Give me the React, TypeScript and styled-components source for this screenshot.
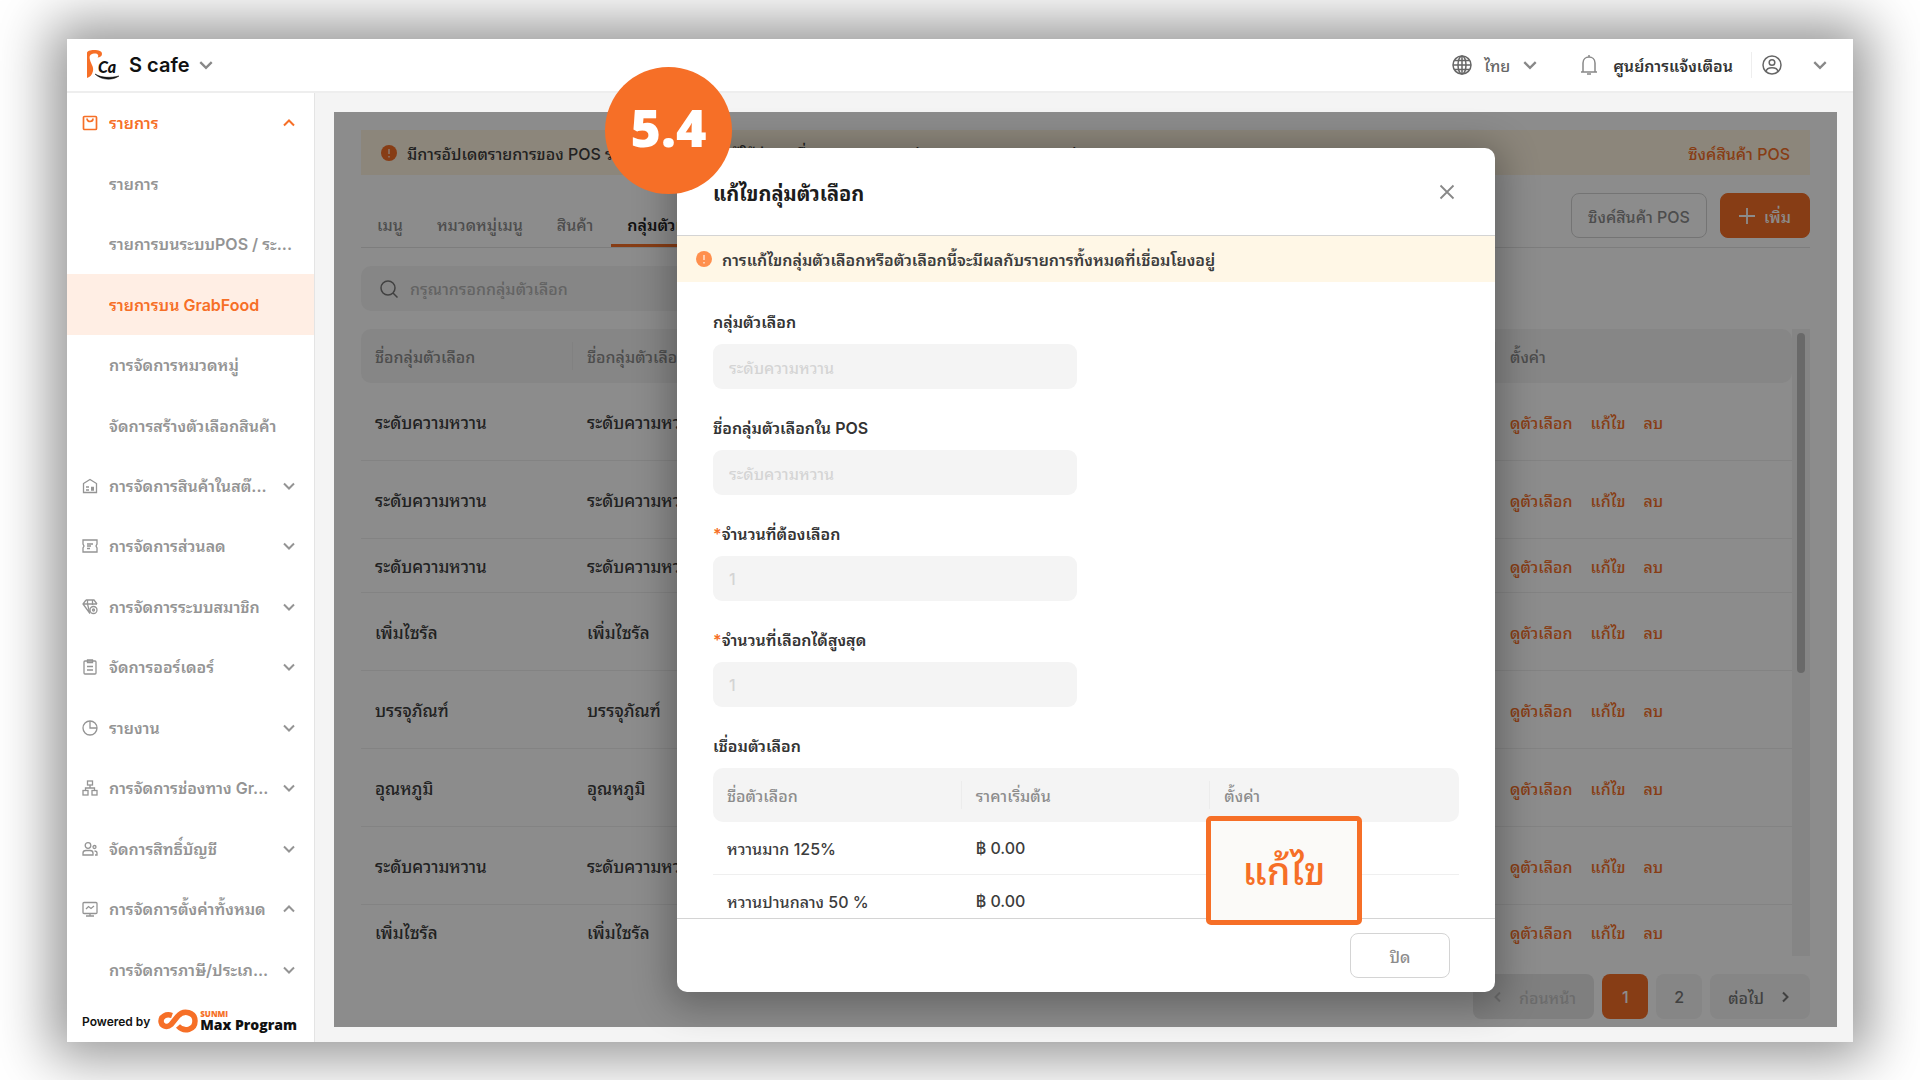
import React from "react";
import styled, { createGlobalStyle, css } from "styled-components";

const GlobalStyle = createGlobalStyle`
  * { box-sizing: border-box; }
  body { margin: 0; background: #fff; font-family: Inter, "Noto Sans Thai Looped", "Noto Looped Thai", Loma, Waree, Garuda, "Noto Sans Thai", "Noto Sans", "Liberation Sans", sans-serif; font-size: 16px; font-weight: 500; color: #3c3c3c; }
  button, input { font: inherit; }
  button { cursor: pointer; }
  a { text-decoration: none; color: inherit; }
  svg { display: block; flex: none; }
`;

const orange = "#f66f27";

const Stage = styled.div`
  height: 100vh;
  min-height: 900px;
  padding: 39px 67px 38px;
  overflow: hidden;
`;
const Frame = styled.div`
  position: relative;
  height: 100%;
  display: grid;
  grid-template: 54px minmax(0, 1fr) / 248px minmax(0, 1fr);
  background: #f4f4f4;
  box-shadow: 0 0 52px 16px rgba(0, 0, 0, 0.42);
`;
const TopBar = styled.header`
  grid-column: 1 / -1;
  display: flex;
  align-items: center;
  justify-content: space-between;
  padding: 0 25px 0 18px;
  background: #fff;
  border-bottom: 2px solid #eee;
`;
const Plain = styled.button`
  display: flex;
  align-items: center;
  padding: 0;
  border: 0;
  background: none;
  color: inherit;
`;
const Brand = styled(Plain)`
  gap: 8px;
  font-size: 20px;
  font-weight: 600;
  color: #111;
`;
const TopTools = styled.div`
  display: flex;
  align-items: center;
  color: #666;
`;
const LangButton = styled(Plain)`
  gap: 12px;
  margin-right: 42px;
`;
const NoticeButton = styled(Plain)`
  gap: 15px;
  font-weight: 600;
  color: #333;
  padding-right: 18px;
  border-right: 1px solid #eee;
`;
const UserButton = styled(Plain)`
  gap: 30px;
  padding-left: 10px;
`;

const Sidebar = styled.aside`
  display: flex;
  flex-direction: column;
  background: #fff;
  border-right: 1px solid #e4e4e4;
`;
const NavList = styled.nav`
  flex: 1;
  display: grid;
  grid-auto-rows: 1fr;
`;
const NavItem = styled.a<{ $tone?: "open" | "active" }>`
  display: grid;
  grid-template-columns: 16px minmax(0, 1fr) 14px;
  align-items: center;
  gap: 11px;
  padding: 0 18px 0 15px;
  font-weight: 600;
  color: ${(p) => (p.$tone ? orange : "#949494")};
  background: ${(p) => (p.$tone === "active" ? "#ffeee4" : "transparent")};
`;
const NavText = styled.span<{ $wide?: boolean }>`
  overflow: hidden;
  white-space: nowrap;
  line-height: 28px;
  ${(p) => p.$wide && css`grid-column: 2 / 4;`}
`;
const Powered = styled.footer`
  display: flex;
  align-items: center;
  gap: 8px;
  height: 42px;
  padding: 0 0 0 15px;
  color: #111;
  font-size: 12px;
  font-weight: 600;
  white-space: nowrap;
`;
const MaxBrand = styled.span`
  display: flex;
  align-items: center;
  gap: 2px;
`;
const PoweredName = styled.span`
  display: flex;
  flex-direction: column;
  font-family: "Open Sans", sans-serif;
  font-weight: 800;
  font-size: 14px;
  line-height: 14px;
`;
const Sunmi = styled.span`
  font-size: 8px;
  line-height: 8px;
  color: ${orange};
`;

const Content = styled.main`
  display: flex;
  padding: 19px 16px 15px 19px;
`;
const Panel = styled.section`
  position: relative;
  flex: 1;
  min-width: 0;
  display: flex;
  flex-direction: column;
  padding: 18px 27px 8px;
  background: #fff;
`;
const Banner = styled.div`
  display: flex;
  align-items: center;
  gap: 10px;
  height: 45px;
  padding: 0 20px;
  background: #fff4e0;
  white-space: nowrap;
`;
const BannerLink = styled.a`
  margin-left: auto;
  color: ${orange};
`;
const TabBar = styled.div`
  display: flex;
  align-items: flex-end;
  margin-top: 18px;
  height: 55px;
  border-bottom: 1px solid #e4e4e4;
`;
const Tab = styled.button<{ $active?: boolean }>`
  height: 44px;
  padding: 0 16px;
  margin-right: 2px;
  border: 0;
  border-bottom: 3px solid ${(p) => (p.$active ? orange : "transparent")};
  background: none;
  white-space: nowrap;
  color: ${(p) => (p.$active ? "#222" : "#8c8c8c")};
  font-weight: ${(p) => (p.$active ? 600 : 500)};
`;
const Actions = styled.div`
  display: flex;
  gap: 13px;
  margin-left: auto;
  align-self: flex-start;
`;
const Button = styled.button<{ $primary?: boolean }>`
  display: flex;
  align-items: center;
  justify-content: center;
  gap: 9px;
  height: 45px;
  min-width: ${(p) => (p.$primary ? 90 : 136)}px;
  padding: 0 15px;
  border-radius: 8px;
  white-space: nowrap;
  border: 1px solid ${(p) => (p.$primary ? orange : "#d4d4d4")};
  background: ${(p) => (p.$primary ? orange : "#fff")};
  color: ${(p) => (p.$primary ? "#fff" : "#8c8c8c")};
`;
const Search = styled.label`
  display: flex;
  align-items: center;
  gap: 12px;
  width: 380px;
  height: 45px;
  margin-top: 18px;
  padding: 0 19px;
  border-radius: 10px;
  background: #f4f4f4;
  color: #8c8c8c;
  input {
    flex: 1;
    min-width: 0;
    border: 0;
    padding: 0;
    background: none;
    &::placeholder { color: #b4b4b4; opacity: 1; }
  }
`;
const TableArea = styled.div`
  display: flex;
  flex: 1;
  min-height: 0;
  margin-top: 18px;
  overflow: hidden;
`;
const ScrollTrack = styled.div`
  width: 18px;
  padding: 4px 5px;
  background: #f2f2f2;
`;
const ScrollThumb = styled.div`
  height: 340px;
  border-radius: 5px;
  background: #c0c0c0;
`;
const Table = styled.table<{ $large?: boolean }>`
  flex: 1;
  width: 100%;
  align-self: flex-start;
  table-layout: fixed;
  border-collapse: separate;
  border-spacing: 0;
  th, td { text-align: left; white-space: nowrap; padding: 0 14px; overflow: hidden; }
  th {
    height: 54px;
    background: linear-gradient(#ececec, #ececec) no-repeat right center / 1px 28px #f4f4f4;
    color: #8c8c8c;
    font-weight: 500;
    &:first-child { border-radius: 10px 0 0 10px; }
    &:last-child { border-radius: 0 10px 10px 0; background: #f4f4f4; }
  }
  td {
    border-bottom: 1px solid #efefef;
    font-size: ${(p) => (p.$large ? 17 : 16)}px;
  }
`;
const Row = styled.tr<{ $height: number }>`
  height: ${(p) => p.$height}px;
`;
const RowLinks = styled.div`
  display: flex;
  gap: 18px;
  font-size: 16px;
  color: ${orange};
`;
const Pager = styled.nav`
  display: flex;
  justify-content: flex-end;
  gap: 8px;
  margin-top: 18px;
`;
const PageButton = styled.button<{ $active?: boolean }>`
  display: flex;
  align-items: center;
  justify-content: center;
  gap: 14px;
  height: 45px;
  min-width: 46px;
  padding: 0 18px;
  border: 0;
  border-radius: 8px;
  background: ${(p) => (p.$active ? orange : "#f4f4f4")};
  color: ${(p) => (p.$active ? "#fff" : "#777")};
  &:disabled { color: #c4c4c4; background: #e8e8e8; }
`;

const Mask = styled.div`
  position: absolute;
  inset: 0;
  background: rgba(0, 0, 0, 0.45);
`;
const Dialog = styled.section`
  position: absolute;
  inset: 36px 342px 35px 343px;
  display: flex;
  flex-direction: column;
  border-radius: 10px;
  background: #fff;
  box-shadow: 0 6px 36px 8px rgba(0, 0, 0, 0.28);
`;
const DialogHead = styled.header`
  display: flex;
  align-items: center;
  justify-content: space-between;
  height: 88px;
  padding: 0 40px 0 36px;
  border-bottom: 1px solid #d4d4d4;
`;
const DialogTitle = styled.h2`
  margin: 0;
  font-size: 20px;
  font-weight: 700;
  color: #1c1c1c;
`;
const Warning = styled.div`
  display: flex;
  align-items: center;
  gap: 10px;
  height: 46px;
  padding: 0 19px;
  background: #fff7e6;
  font-weight: 600;
  white-space: nowrap;
`;
const DialogBody = styled.div`
  flex: 1;
  min-height: 0;
  overflow: hidden;
  padding: 27px 36px 0;
`;
const Field = styled.div`
  display: grid;
  gap: 9px;
  margin-bottom: 26px;
`;
const FieldLabel = styled.label`
  line-height: 26px;
  font-weight: 600;
  color: #333;
`;
const Star = styled.span`
  color: ${orange};
`;
const FieldInput = styled.input`
  width: 364px;
  height: 45px;
  padding: 0 16px;
  border: 0;
  border-radius: 9px;
  background: #f4f4f4;
  color: #d4d4d4;
`;
const DialogFoot = styled.footer`
  display: flex;
  justify-content: flex-end;
  align-items: center;
  height: 74px;
  padding: 0 45px;
  border-top: 1px solid #d4d4d4;
  ${Button} { min-width: 100px; }
`;
const Callout = styled.div`
  position: absolute;
  left: 529px;
  top: 668px;
  width: 156px;
  height: 109px;
  display: flex;
  align-items: center;
  justify-content: center;
  padding-bottom: 6px;
  border: 5px solid ${orange};
  border-radius: 5px;
  background: #fbfaf8;
  color: ${orange};
  font-size: 38px;
  font-weight: 500;
`;
const StepBadge = styled.div`
  position: absolute;
  left: 538px;
  top: 28px;
  width: 127px;
  height: 127px;
  display: flex;
  align-items: center;
  justify-content: center;
  padding-bottom: 8px;
  border-radius: 50%;
  background: ${orange};
  color: #fff;
  font-family: "Open Sans", "Noto Sans", sans-serif;
  font-size: 52px;
  font-weight: 800;
`;

const Chevron = ({ dir = "down", size = 14, color = "#888" }: { dir?: "down" | "up" | "left" | "right"; size?: number; color?: string }) => {
  const d = { down: "M2 4.500l5 5 5-5", up: "M2 9.500l5-5 5 5", left: "M9 2.500L4.500 7 9 11.500", right: "M5 2.500L9.500 7 5 11.500" }[dir];
  return <svg width={size} height={size} viewBox="0 0 14 14" fill="none" stroke={color} strokeWidth="2"><path d={d} /></svg>;
};

const Alert = ({ color = "#ff8f4d" }: { color?: string }) => (
  <svg width="16" height="16" viewBox="0 0 16 16"><circle cx="8" cy="8" r="8" fill={color} /><path d="M8 4v5M8 11v1.4" stroke="#ffe6d6" strokeWidth="1.4" /></svg>
);

const iconPaths: Record<string, React.ReactNode> = {
  bag: <g strokeWidth="1.700"><rect x="1.500" y="1.500" width="13" height="13" rx="1" /><path d="M5 3.500c0 4 6 4 6 0" /></g>,
  stock: <><path d="M1.500 5.500L8 1.500l6.500 4V14.500h-13z" /><path d="M4 9h3M4 12h3M9 9.500h3M9 12h3M9 10.500h3" /></>,
  ticket: <><path d="M1 2h14v4l-1 2 1 2v4H1v-4l1-2-1-2z" /><path d="M5 6h6M5 8h4M5 10.500h3" /></>,
  gem: <><path d="M4 1h8l3 4M8 14.500L1 5l3-4M1 5h14M5.500 1v4l2 8M10.500 1v5" /><circle cx="11.500" cy="11" r="3.500" /><circle cx="11.500" cy="11" r="1" /></>,
  clip: <><rect x="2" y="2" width="12" height="13" rx="1" /><path d="M5.500 1h5v2.500h-5zM5 7.500h6M5 11h6" /></>,
  clock: <><circle cx="8" cy="8" r="7" /><path d="M8 1v7h7" /></>,
  tree: <><rect x="5.500" y="1" width="5" height="4" /><rect x="1" y="10.500" width="5" height="4.500" /><rect x="10" y="10.500" width="5" height="4.500" /><path d="M8 5v3M3.500 10.500V8h9v2.500" /></>,
  users: <><circle cx="6" cy="4.500" r="2.800" /><path d="M1 14v-2c0-2 1.500-2.500 3-2.500h4c1.500 0 3 .5 3 2.500v2z" /><circle cx="12.500" cy="6" r="1.500" /><path d="M12.500 10c2 0 2.500 1 2.500 2v2h-2" /></>,
  screen: <><rect x="1" y="1.500" width="14" height="11" rx="1" /><path d="M4 8l2.500-2.500 2.500 2 3-2.500M4 15h8M8 12.500V15" /></>,
};

const NavIcon = ({ name }: { name?: string }) => (
  <svg width="16" height="16" viewBox="0 0 16 16" fill="none" stroke="currentColor" strokeWidth="1.300">{name && iconPaths[name]}</svg>
);

const BrandLogo = () => (
  <svg width="36" height="36" viewBox="0 0 36 36">
    <path d="M2 6C2 4 5 3 9 3c5 0 8 1 8 4 0 2-2 3.500-4.500 3.500C14 9 13.500 6 9 6.500 5 7 4 9 5 13c1 4 4 7 3 11-1 4-3 6-6 7z" fill={orange} />
    <text x="13" y="26" fontFamily="Lato, sans-serif" fontStyle="italic" fontWeight="900" fontSize="16" fill="#111">Ca</text>
    <path d="M10 27c7 4 15 4 24 2-7 5-18 4-24-2z" fill="#111" stroke="#111" strokeWidth="0.500" />
  </svg>
);

const MaxLogo = () => (
  <svg width="40" height="24" viewBox="0 0 40 24" fill="none" stroke={orange} strokeWidth="5.500">
    <path d="M14 6.500C8 4.500 3 7.500 3 12s5.500 7.500 10 3.500L19.500 7.500C26 0 37 3.500 37 12s-10.500 12-17 5" />
  </svg>
);

type NavEntry = { text: string; icon?: string; chevron?: "up" | "down"; tone?: "open" | "active" };
const nav: NavEntry[] = [
  { text: "รายการ", icon: "bag", chevron: "up", tone: "open" },
  { text: "รายการ" },
  { text: "รายการบนระบบPOS / ระ..." },
  { text: "รายการบน GrabFood", tone: "active" },
  { text: "การจัดการหมวดหมู่" },
  { text: "จัดการสร้างตัวเลือกสินค้า" },
  { text: "การจัดการสินค้าในสต๊...", icon: "stock", chevron: "down" },
  { text: "การจัดการส่วนลด", icon: "ticket", chevron: "down" },
  { text: "การจัดการระบบสมาชิก", icon: "gem", chevron: "down" },
  { text: "จัดการออร์เดอร์", icon: "clip", chevron: "down" },
  { text: "รายงาน", icon: "clock", chevron: "down" },
  { text: "การจัดการช่องทาง Gr...", icon: "tree", chevron: "down" },
  { text: "จัดการสิทธิ์บัญชี", icon: "users", chevron: "down" },
  { text: "การจัดการตั้งค่าทั้งหมด", icon: "screen", chevron: "up" },
  { text: "การจัดการภาษี/ประเภ...", chevron: "down" },
];

const groups: [string, number][] = [
  ["ระดับความหวาน", 78], ["ระดับความหวาน", 78], ["ระดับความหวาน", 54], ["เพิ่มไซรัล", 78],
  ["บรรจุภัณฑ์", 78], ["อุณหภูมิ", 78], ["ระดับความหวาน", 78], ["เพิ่มไซรัล", 54],
];

const fields = [
  { id: "group", label: "กลุ่มตัวเลือก", value: "ระดับความหวาน" },
  { id: "pos", label: "ชื่อกลุ่มตัวเลือกใน POS", value: "ระดับความหวาน" },
  { id: "min", label: "จำนวนที่ต้องเลือก", value: "1", required: true },
  { id: "max", label: "จำนวนที่เลือกได้สูงสุด", value: "1", required: true },
];

const EditDialog = () => (
  <Dialog role="dialog" aria-labelledby="dialog-title">
    <DialogHead>
      <DialogTitle id="dialog-title">แก้ไขกลุ่มตัวเลือก</DialogTitle>
      <Plain aria-label="ปิดหน้าต่าง">
        <svg width="16" height="16" viewBox="0 0 16 16" stroke="#888" strokeWidth="1.800"><path d="M1.500 1.500l13 13M14.500 1.500l-13 13" /></svg>
      </Plain>
    </DialogHead>
    <Warning><Alert />การแก้ไขกลุ่มตัวเลือกหรือตัวเลือกนี้จะมีผลกับรายการทั้งหมดที่เชื่อมโยงอยู่</Warning>
    <DialogBody>
      {fields.map((f) => (
        <Field key={f.id}>
          <FieldLabel htmlFor={f.id}>{f.required && <Star>*</Star>}{f.label}</FieldLabel>
          <FieldInput id={f.id} defaultValue={f.value} disabled />
        </Field>
      ))}
      <Field>
        <FieldLabel as="div">เชื่อมตัวเลือก</FieldLabel>
        <Table>
          <thead><tr><th>ชื่อตัวเลือก</th><th>ราคาเริ่มต้น</th><th>ตั้งค่า</th></tr></thead>
          <tbody>
            <Row $height={53}><td>หวานมาก 125%</td><td>฿ 0.00</td><td /></Row>
            <Row $height={53}><td>หวานปานกลาง 50 %</td><td>฿ 0.00</td><td /></Row>
          </tbody>
        </Table>
      </Field>
    </DialogBody>
    <DialogFoot><Button>ปิด</Button></DialogFoot>
    <Callout>แก้ไข</Callout>
  </Dialog>
);

export default function App() {
  return (
    <Stage>
      <GlobalStyle />
      <Frame>
        <TopBar>
          <Brand><BrandLogo />S cafe<Chevron size={16} /></Brand>
          <TopTools>
            <LangButton>
              <svg width="20" height="20" viewBox="0 0 20 20" fill="none" stroke="#666" strokeWidth="1.500"><circle cx="10" cy="10" r="9" /><ellipse cx="10" cy="10" rx="4" ry="9" /><path d="M10 1v18M1 10h18M2.500 5.500h15M2.500 14.500h15" /></svg>
              ไทย<Chevron size={16} />
            </LangButton>
            <NoticeButton>
              <svg width="18" height="20" viewBox="0 0 18 20" fill="none" stroke="#888" strokeWidth="1.500"><path d="M1 17h16M3 17V8c0-8 12-8 12 0v9M9 2V0M7 19h4" /></svg>
              ศูนย์การแจ้งเตือน
            </NoticeButton>
            <UserButton aria-label="บัญชี">
              <svg width="20" height="20" viewBox="0 0 20 20" fill="none" stroke="#666" strokeWidth="1.500"><circle cx="10" cy="10" r="9" /><circle cx="10" cy="7.500" r="2.800" /><path d="M4 16.500c1-5 11-5 12 0" /></svg>
              <Chevron size={16} />
            </UserButton>
          </TopTools>
        </TopBar>
        <Sidebar>
          <NavList>
            {nav.map((n, i) => (
              <NavItem key={i} href="#" $tone={n.tone}>
                <NavIcon name={n.icon} />
                <NavText $wide={!n.chevron}>{n.text}</NavText>
                {n.chevron && <Chevron dir={n.chevron} color="currentColor" />}
              </NavItem>
            ))}
          </NavList>
          <Powered>
            Powered by
            <MaxBrand><MaxLogo /><PoweredName><Sunmi>SUNMI</Sunmi>Max Program</PoweredName></MaxBrand>
          </Powered>
        </Sidebar>
        <Content>
          <Panel>
            <Banner>
              <Alert color={orange} />
              มีการอัปเดตรายการของ POS รายการ กรุณาซิงค์ ผู้ใช้ล่าสุดเมื่อเวลาของ POS (22/11/2025 11:40:46)
              <BannerLink href="#">ซิงค์สินค้า POS</BannerLink>
            </Banner>
            <TabBar>
              <Tab>เมนู</Tab><Tab>หมวดหมู่เมนู</Tab><Tab>สินค้า</Tab><Tab $active>กลุ่มตัวเลือก</Tab>
              <Actions>
                <Button>ซิงค์สินค้า POS</Button>
                <Button $primary>
                  <svg width="16" height="16" viewBox="0 0 16 16" stroke="#fff" strokeWidth="1.800"><path d="M8 0v16M0 8h16" /></svg>
                  เพิ่ม
                </Button>
              </Actions>
            </TabBar>
            <Search>
              <svg width="18" height="18" viewBox="0 0 18 18" fill="none" stroke="#777" strokeWidth="1.500"><circle cx="8" cy="8" r="7" /><path d="M13 13l4.500 4.500" /></svg>
              <input aria-label="ค้นหา" placeholder="กรุณากรอกกลุ่มตัวเลือก" />
            </Search>
            <TableArea>
              <Table $large>
                <colgroup><col style={{ width: 212 }} /><col /><col style={{ width: 296 }} /></colgroup>
                <thead><tr><th>ชื่อกลุ่มตัวเลือก</th><th>ชื่อกลุ่มตัวเลือกใน POS</th><th>ตั้งค่า</th></tr></thead>
                <tbody>
                  {groups.map(([name, height], i) => (
                    <Row key={i} $height={height}>
                      <td>{name}</td><td>{name}</td>
                      <td><RowLinks><a href="#">ดูตัวเลือก</a><a href="#">แก้ไข</a><a href="#">ลบ</a></RowLinks></td>
                    </Row>
                  ))}
                </tbody>
              </Table>
              <ScrollTrack><ScrollThumb /></ScrollTrack>
            </TableArea>
            <Pager>
              <PageButton disabled><Chevron dir="left" color="currentColor" />ก่อนหน้า</PageButton>
              <PageButton $active>1</PageButton>
              <PageButton>2</PageButton>
              <PageButton>ต่อไป<Chevron dir="right" color="currentColor" /></PageButton>
            </Pager>
            <Mask />
            <EditDialog />
          </Panel>
        </Content>
        <StepBadge>5.4</StepBadge>
      </Frame>
    </Stage>
  );
}
